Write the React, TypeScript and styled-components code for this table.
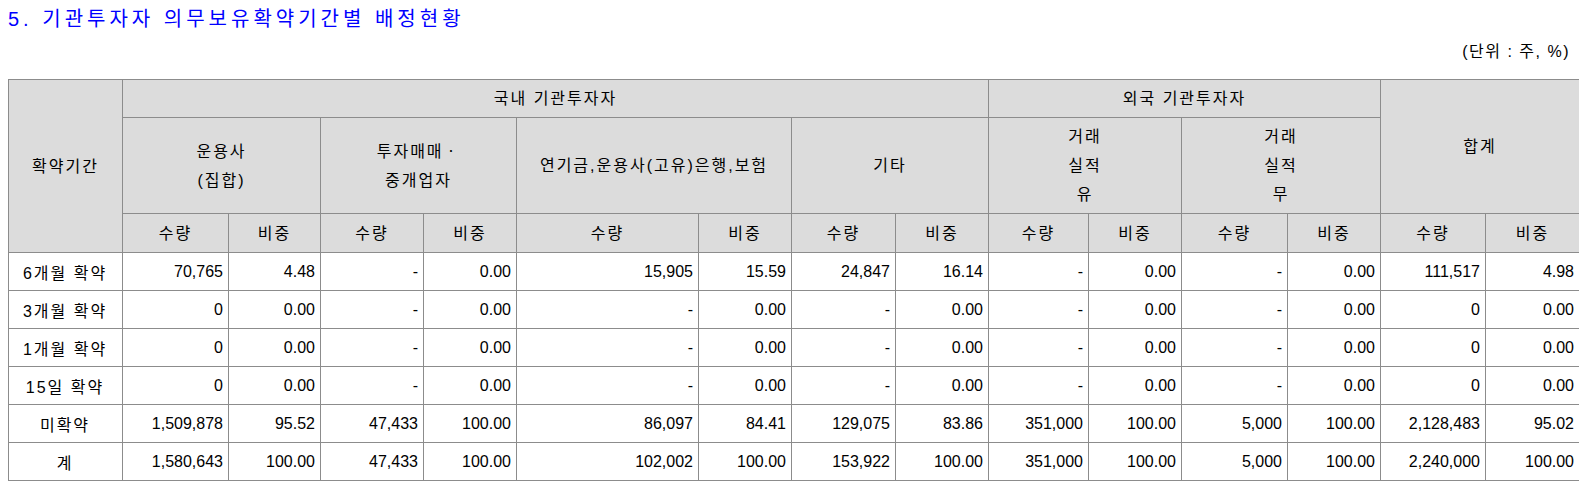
import React from 'react';
import styled, {createGlobalStyle} from 'styled-components';

const GlobalStyle = createGlobalStyle`
  body {
    margin: 8px;
    background: #ffffff;
    font-family: "Liberation Sans", "Noto Sans CJK KR", sans-serif;
    color: #000;
  }
`

const Title = styled.h3`
  margin: 0;
  font-size: 20px;
  line-height: 22px;
  font-weight: normal;
  letter-spacing: 4px;
  color: #0000ff;
`

const Unit = styled.div`
  margin-top: 12px;
  text-align: right;
  font-size: 16px;
  line-height: 20px;
  letter-spacing: 1.5px;
  padding-right: 9px;
`

const Table = styled.table`
  margin-top: 17px;
  width: 1571px;
  table-layout: fixed;
  border-collapse: collapse;
  border: 1px solid #000;
  font-size: 16px;
`

const HeadCell = styled.th<{ $h?: number }>`
  background: #dcdcdc;
  border: 1px solid #8c8c8c;
  font-weight: normal;
  text-align: center;
  vertical-align: middle;
  padding: 0 2px;
  line-height: 29px;
  letter-spacing: 2px;
  height: ${p => p.$h ?? 37}px;
`

const Cell = styled.td<{ $center?: boolean }>`
  border: 1px solid #8c8c8c;
  text-align: ${p => (p.$center ? 'center' : 'right')};
  letter-spacing: ${p => (p.$center ? '2px' : '0')};
  padding: 0 5px 0 4px;
  height: 37px;
  white-space: nowrap;
`

const widths = [114, 106, 92, 103, 93, 182, 93, 104, 93, 100, 93, 106, 93, 105, 94]

type Row = { label: string; values: string[] }

const rows: Row[] = [
    {label: '6개월 확약', values: ['70,765', '4.48', '-', '0.00', '15,905', '15.59', '24,847', '16.14', '-', '0.00', '-', '0.00', '111,517', '4.98']},
    {label: '3개월 확약', values: ['0', '0.00', '-', '0.00', '-', '0.00', '-', '0.00', '-', '0.00', '-', '0.00', '0', '0.00']},
    {label: '1개월 확약', values: ['0', '0.00', '-', '0.00', '-', '0.00', '-', '0.00', '-', '0.00', '-', '0.00', '0', '0.00']},
    {label: '15일 확약', values: ['0', '0.00', '-', '0.00', '-', '0.00', '-', '0.00', '-', '0.00', '-', '0.00', '0', '0.00']},
    {label: '미확약', values: ['1,509,878', '95.52', '47,433', '100.00', '86,097', '84.41', '129,075', '83.86', '351,000', '100.00', '5,000', '100.00', '2,128,483', '95.02']},
    {label: '계', values: ['1,580,643', '100.00', '47,433', '100.00', '102,002', '100.00', '153,922', '100.00', '351,000', '100.00', '5,000', '100.00', '2,240,000', '100.00']},
]

const groups = [
    ['운용사', '(집합)'],
    ['투자매매ㆍ', '중개업자'],
    ['연기금,운용사(고유)은행,보험'],
    ['기타'],
    ['거래', '실적', '유'],
    ['거래', '실적', '무'],
]

const App = () => {
    return (
        <>
            <GlobalStyle/>
            <Title>5. 기관투자자 의무보유확약기간별 배정현황</Title>
            <Unit>(단위 : 주, %)</Unit>
            <Table>
                <colgroup>
                    {widths.map((w, i) => <col key={i} style={{width: w}}/>)}
                </colgroup>
                <thead>
                <tr>
                    <HeadCell rowSpan={3}>확약기간</HeadCell>
                    <HeadCell colSpan={8}>국내 기관투자자</HeadCell>
                    <HeadCell colSpan={4}>외국 기관투자자</HeadCell>
                    <HeadCell colSpan={2} rowSpan={2}>합계</HeadCell>
                </tr>
                <tr>
                    {groups.map((g, i) => (
                        <HeadCell key={i} colSpan={2} $h={95}>
                            {g.map((line, j) => <div key={j}>{line}</div>)}
                        </HeadCell>
                    ))}
                </tr>
                <tr>
                    {Array.from({length: 7}).map((_, i) => (
                        <React.Fragment key={i}>
                            <HeadCell $h={38}>수량</HeadCell>
                            <HeadCell $h={38}>비중</HeadCell>
                        </React.Fragment>
                    ))}
                </tr>
                </thead>
                <tbody>
                {rows.map(r => (
                    <tr key={r.label}>
                        <Cell $center>{r.label}</Cell>
                        {r.values.map((v, i) => <Cell key={i}>{v}</Cell>)}
                    </tr>
                ))}
                </tbody>
            </Table>
        </>
    );
}

export default App;
